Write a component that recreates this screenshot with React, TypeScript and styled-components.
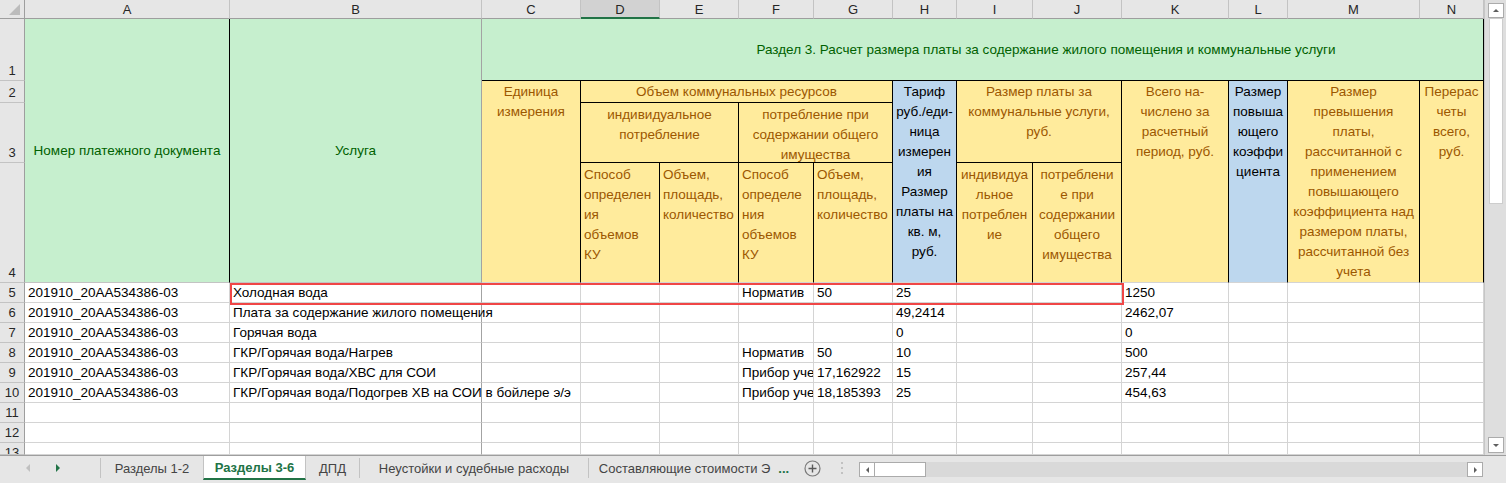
import styled, { createGlobalStyle } from "styled-components";

const GlobalStyle = createGlobalStyle`
    html, body {
        margin: 0;
        padding: 0;
        background: #fff;
    }
    body {
        font-family: "Liberation Sans", Arial, sans-serif;
        overflow: hidden;
    }
`

const COLS = ["A", "B", "C", "D", "E", "F", "G", "H", "I", "J", "K", "L", "M", "N"];
const WIDTHS = [205, 252, 99, 79, 79, 75, 79, 64, 76, 89, 107, 59, 132, 64];
const ROW_HEIGHTS = [62, 22, 60, 120, 20, 20, 20, 20, 20, 20, 20, 20, 12];

const FILL = { green: "#c6efce", yellow: "#ffeb9c", blue: "#bdd7ee" };
const INK = { green: "#006100", yellow: "#9c5700", blue: "#000" };
const GRID = "#d4d4d4";
const FREEZE = "#a3a3a3";
const EXCEL_GREEN = "#217346";

type Fill = keyof typeof FILL;

const Page = styled.div`
    width: 1506px;
    height: 483px;
    display: flex;
    flex-direction: column;
    background: #fff;
`

const Top = styled.div`
    display: flex;
    height: 455px;
`

const Sheet = styled.div`
    width: 1484px;
    height: 455px;
    display: grid;
    grid-template-columns: 25px ${WIDTHS.map((w) => w + "px").join(" ")};
    grid-template-rows: 19px ${ROW_HEIGHTS.map((h) => h + "px").join(" ")};
    overflow: hidden;
    font-size: 13.5px;
`

const Corner = styled.div`
    grid-column: 1;
    grid-row: 1;
    background: #e6e6e6;
    border-right: 1px solid #9e9e9e;
    border-bottom: 1px solid #9e9e9e;
    position: relative;
    &::after {
        content: "";
        position: absolute;
        right: 4px;
        bottom: 3px;
        border-style: solid;
        border-width: 0 0 11px 11px;
        border-color: transparent transparent #bcbcbc transparent;
    }
`

const ColHead = styled.div<{ $col: number; $active?: boolean }>`
    grid-column: ${(p) => p.$col};
    grid-row: 1;
    background: ${(p) => (p.$active ? "#d2d2d2" : "#e6e6e6")};
    border-right: 1px solid #c3c3c3;
    border-bottom: ${(p) => (p.$active ? `2px solid ${EXCEL_GREEN}` : "1px solid #9e9e9e")};
    color: #262626;
    font-size: 13px;
    text-align: center;
    line-height: 19px;
`

const RowHead = styled.div<{ $row: number; $tall?: boolean }>`
    grid-column: 1;
    grid-row: ${(p) => p.$row};
    background: #e6e6e6;
    border-right: 1px solid #9e9e9e;
    border-bottom: 1px solid #c3c3c3;
    color: #262626;
    font-size: 13px;
    display: flex;
    flex-direction: column;
    justify-content: ${(p) => (p.$tall ? "flex-end" : "flex-start")};
    align-items: center;
    line-height: 19px;
    overflow: hidden;
`

const HeadCell = styled.div<{
    $fill: Fill;
    $col: string;
    $row: string;
    $align?: "left" | "center";
    $middle?: boolean;
    $pt?: number;
    $pl?: number;
    $r?: string;
    $b?: string;
}>`
    grid-column: ${(p) => p.$col};
    grid-row: ${(p) => p.$row};
    background: ${(p) => FILL[p.$fill]};
    color: ${(p) => INK[p.$fill]};
    border-right: 1px solid ${(p) => p.$r ?? "#000"};
    border-bottom: 1px solid ${(p) => p.$b ?? "#000"};
    display: flex;
    flex-direction: column;
    justify-content: ${(p) => (p.$middle ? "center" : "flex-start")};
    align-items: ${(p) => (p.$align === "left" ? "flex-start" : "center")};
    padding: ${(p) => p.$pt ?? 1}px 1px 0 ${(p) => p.$pl ?? 1}px;
    line-height: 20px;
    white-space: nowrap;
    overflow: hidden;
    min-width: 0;
`

const TextLine = styled.span`
    display: block;
`

const DataCell = styled.div<{ $col: number; $row: number; $freeze?: boolean; $spill?: boolean }>`
    grid-column: ${(p) => p.$col};
    grid-row: ${(p) => p.$row};
    border-right: 1px solid ${(p) => (p.$freeze ? FREEZE : GRID)};
    border-bottom: 1px solid ${GRID};
    padding: 0 3px;
    line-height: 20px;
    color: #000;
    white-space: nowrap;
    overflow: ${(p) => (p.$spill ? "visible" : "hidden")};
    min-width: 0;
`

const Selection = styled.div`
    grid-column: 3 / 12;
    grid-row: 6;
    border: 2px solid #f04646;
    margin: 0 -2px -2px 0;
    pointer-events: none;
`

const VScroll = styled.div`
    width: 22px;
    background: #dedede;
    border-left: 1px solid #c6c6c6;
    box-sizing: border-box;
    display: flex;
    flex-direction: column;
    align-items: center;
    padding: 3px 0 2px;
`

const ScrollBtn = styled.div<{ $h?: number }>`
    width: 16px;
    height: ${(p) => p.$h ?? 15}px;
    box-sizing: border-box;
    background: #fff;
    border: 1px solid #ababab;
    display: flex;
    align-items: center;
    justify-content: center;
    flex: none;
`

const VThumb = styled.div`
    width: 14px;
    height: 186px;
    background: #fff;
    border: 1px solid #cdcdcd;
    box-sizing: border-box;
    flex: none;
`

const Spacer = styled.div`
    flex: 1;
`

const Arrow = styled.span<{ $dir: "up" | "down" | "left" | "right"; $color?: string; $size?: number }>`
    width: 0;
    height: 0;
    border-style: solid;
    ${(p) => {
        const s = p.$size ?? 3;
        const c = p.$color ?? "#5f5f5f";
        if (p.$dir === "up") return `border-width: 0 ${s}px ${s}px ${s}px; border-color: transparent transparent ${c} transparent;`;
        if (p.$dir === "down") return `border-width: ${s}px ${s}px 0 ${s}px; border-color: ${c} transparent transparent transparent;`;
        if (p.$dir === "left") return `border-width: ${s}px ${s}px ${s}px 0; border-color: transparent ${c} transparent transparent;`;
        return `border-width: ${s}px 0 ${s}px ${s}px; border-color: transparent transparent transparent ${c};`;
    }}
`

const TabBar = styled.div`
    height: 28px;
    box-sizing: border-box;
    border-top: 1px solid #9e9e9e;
    background: #e6e6e6;
    display: flex;
    align-items: flex-start;
    font-family: "Liberation Sans", Arial, sans-serif;
    font-size: 13px;
`

const SheetNav = styled.div`
    width: 100px;
    height: 24px;
    display: flex;
    align-items: center;
    gap: 26px;
    padding-left: 26px;
    box-sizing: border-box;
    flex: none;
`

const Sep = styled.div`
    width: 1px;
    height: 20px;
    margin-top: 2px;
    background: #c3c3c3;
    flex: none;
`

const Tab = styled.div<{ $w: number; $active?: boolean }>`
    width: ${(p) => p.$w}px;
    height: 24px;
    box-sizing: border-box;
    display: flex;
    align-items: center;
    justify-content: center;
    white-space: nowrap;
    flex: none;
    color: ${(p) => (p.$active ? EXCEL_GREEN : "#444")};
    font-weight: ${(p) => (p.$active ? 700 : 400)};
    background: ${(p) => (p.$active ? "#fff" : "transparent")};
    border-bottom: ${(p) => (p.$active ? `2px solid ${EXCEL_GREEN}` : "none")};
    border-left: ${(p) => (p.$active ? "1px solid #c3c3c3" : "none")};
    border-right: ${(p) => (p.$active ? "1px solid #c3c3c3" : "none")};
`

const More = styled.span`
    color: ${EXCEL_GREEN};
    font-weight: 700;
    margin-left: 8px;
`

const IconSlot = styled.div<{ $w: number }>`
    width: ${(p) => p.$w}px;
    height: 24px;
    display: flex;
    align-items: center;
    justify-content: center;
    flex: none;
`

const HScroll = styled.div`
    flex: 1;
    height: 15px;
    margin: 6px 23px 0 0;
    background: #d9d9d9;
    display: flex;
`

const HThumb = styled.div`
    width: 51px;
    height: 15px;
    background: #fff;
    border: 1px solid #ababab;
    border-left: none;
    box-sizing: border-box;
`

type Row = { n: number; cells: Partial<Record<string, string>> };

const ROWS: Row[] = [
    { n: 5, cells: { A: "201910_20AA534386-03", B: "Холодная вода", F: "Норматив", G: "50", H: "25", K: "1250" } },
    { n: 6, cells: { A: "201910_20AA534386-03", B: "Плата за содержание жилого помещения", H: "49,2414", K: "2462,07" } },
    { n: 7, cells: { A: "201910_20AA534386-03", B: "Горячая вода", H: "0", K: "0" } },
    { n: 8, cells: { A: "201910_20AA534386-03", B: "ГКР/Горячая вода/Нагрев", F: "Норматив", G: "50", H: "10", K: "500" } },
    { n: 9, cells: { A: "201910_20AA534386-03", B: "ГКР/Горячая вода/ХВС для СОИ", F: "Прибор учета", G: "17,162922", H: "15", K: "257,44" } },
    { n: 10, cells: { A: "201910_20AA534386-03", B: "ГКР/Горячая вода/Подогрев ХВ на СОИ в бойлере э/э", F: "Прибор учета", G: "18,185393", H: "25", K: "454,63" } },
    { n: 11, cells: {} },
    { n: 12, cells: {} },
    { n: 13, cells: {} },
];

function Lines({ items }: { items: string[] }) {
    return (
        <>
            {items.map((t, i) => (
                <TextLine key={i}>{t}</TextLine>
            ))}
        </>
    );
}

function App() {
    return (
        <Page>
            <GlobalStyle />
            <Top>
                <Sheet>
                    <Corner />
                    {COLS.map((c, i) => (
                        <ColHead key={c} $col={i + 2} $active={c === "D"}>{c}</ColHead>
                    ))}
                    {[1, 2, 3, 4].map((n) => (
                        <RowHead key={n} $row={n + 1} $tall>{n}</RowHead>
                    ))}

                    {/* шапка раздела 3 */}
                    <HeadCell $fill="green" $col="2" $row="2 / 6" $middle $b="#c3c3c3">
                        Номер платежного документа
                    </HeadCell>
                    <HeadCell $fill="green" $col="3" $row="2 / 6" $middle $r={FREEZE} $b="#c3c3c3">
                        Услуга
                    </HeadCell>
                    <HeadCell $fill="green" $col="4 / 16" $row="2" $middle $pl={128}>
                        Раздел 3. Расчет размера платы за содержание жилого помещения и коммунальные услуги
                    </HeadCell>

                    <HeadCell $fill="yellow" $col="4" $row="3 / 6" $b={GRID}>
                        <Lines items={["Единица", "измерения"]} />
                    </HeadCell>
                    <HeadCell $fill="yellow" $col="5 / 9" $row="3">
                        Объем коммунальных ресурсов
                    </HeadCell>
                    <HeadCell $fill="yellow" $col="5 / 7" $row="4" $pt={2}>
                        <Lines items={["индивидуальное", "потребление"]} />
                    </HeadCell>
                    <HeadCell $fill="yellow" $col="7 / 9" $row="4" $pt={2}>
                        <Lines items={["потребление при", "содержании общего", "имущества"]} />
                    </HeadCell>
                    <HeadCell $fill="yellow" $col="5" $row="5" $align="left" $pt={2} $pl={3} $b={GRID}>
                        <Lines items={["Способ", "определен", "ия", "объемов", "КУ"]} />
                    </HeadCell>
                    <HeadCell $fill="yellow" $col="6" $row="5" $align="left" $pt={2} $pl={3} $b={GRID}>
                        <Lines items={["Объем,", "площадь,", "количество"]} />
                    </HeadCell>
                    <HeadCell $fill="yellow" $col="7" $row="5" $align="left" $pt={2} $pl={3} $b={GRID}>
                        <Lines items={["Способ", "определе", "ния", "объемов", "КУ"]} />
                    </HeadCell>
                    <HeadCell $fill="yellow" $col="8" $row="5" $align="left" $pt={2} $pl={3} $b={GRID}>
                        <Lines items={["Объем,", "площадь,", "количество"]} />
                    </HeadCell>
                    <HeadCell $fill="blue" $col="9" $row="3 / 6" $b={GRID}>
                        <Lines items={["Тариф", "руб./еди-", "ница", "измерен", "ия", "Размер", "платы на", "кв. м,", "руб."]} />
                    </HeadCell>
                    <HeadCell $fill="yellow" $col="10 / 12" $row="3 / 5">
                        <Lines items={["Размер платы за", "коммунальные услуги,", "руб."]} />
                    </HeadCell>
                    <HeadCell $fill="yellow" $col="10" $row="5" $pt={2} $b={GRID}>
                        <Lines items={["индивидуа", "льное", "потреблен", "ие"]} />
                    </HeadCell>
                    <HeadCell $fill="yellow" $col="11" $row="5" $pt={2} $b={GRID}>
                        <Lines items={["потреблени", "е при", "содержании", "общего", "имущества"]} />
                    </HeadCell>
                    <HeadCell $fill="yellow" $col="12" $row="3 / 6" $b={GRID}>
                        <Lines items={["Всего на-", "числено за", "расчетный", "период, руб."]} />
                    </HeadCell>
                    <HeadCell $fill="blue" $col="13" $row="3 / 6" $b={GRID}>
                        <Lines items={["Размер", "повыша", "ющего", "коэффи", "циента"]} />
                    </HeadCell>
                    <HeadCell $fill="yellow" $col="14" $row="3 / 6" $b={GRID}>
                        <Lines
                            items={[
                                "Размер",
                                "превышения",
                                "платы,",
                                "рассчитанной с",
                                "применением",
                                "повышающего",
                                "коэффициента над",
                                "размером платы,",
                                "рассчитанной без",
                                "учета",
                            ]}
                        />
                    </HeadCell>
                    <HeadCell $fill="yellow" $col="15" $row="3 / 6" $b={GRID}>
                        <Lines items={["Перерас", "четы", "всего,", "руб."]} />
                    </HeadCell>

                    {/* строки с данными */}
                    {ROWS.map((r) => [
                        <RowHead key={"h" + r.n} $row={r.n + 1}>{r.n}</RowHead>,
                        ...COLS.map((c, i) => (
                            <DataCell key={r.n + c} $col={i + 2} $row={r.n + 1} $freeze={c === "B"} $spill={c === "B"}>
                                {r.cells[c] ?? ""}
                            </DataCell>
                        )),
                    ])}
                    <Selection />
                </Sheet>
                <VScroll>
                    <ScrollBtn>
                        <Arrow $dir="up" />
                    </ScrollBtn>
                    <VThumb />
                    <Spacer />
                    <ScrollBtn $h={16}>
                        <Arrow $dir="down" />
                    </ScrollBtn>
                </VScroll>
            </Top>
            <TabBar>
                <SheetNav>
                    <Arrow $dir="left" $color="#c0c0c0" $size={4} />
                    <Arrow $dir="right" $color={EXCEL_GREEN} $size={4} />
                </SheetNav>
                <Sep />
                <Tab $w={102}>Разделы 1-2</Tab>
                <Tab $w={103} $active>Разделы 3-6</Tab>
                <Tab $w={53}>ДПД</Tab>
                <Sep />
                <Tab $w={228}>Неустойки и судебные расходы</Tab>
                <Sep />
                <Tab $w={210}>
                    Составляющие стоимости Э<More>...</More>
                </Tab>
                <IconSlot $w={26}>
                    <svg width="17" height="17" viewBox="0 0 17 17">
                        <circle cx="8.5" cy="8.5" r="7.5" fill="none" stroke="#7a7a7a" strokeWidth="1.2" />
                        <path d="M8.5 4.5v8M4.5 8.5h8" stroke="#5a5a5a" strokeWidth="1.4" />
                    </svg>
                </IconSlot>
                <IconSlot $w={34}>
                    <svg width="4" height="14" viewBox="0 0 4 14">
                        <circle cx="2" cy="2" r="1" fill="#b5b5b5" />
                        <circle cx="2" cy="7" r="1" fill="#b5b5b5" />
                        <circle cx="2" cy="12" r="1" fill="#b5b5b5" />
                    </svg>
                </IconSlot>
                <HScroll>
                    <ScrollBtn>
                        <Arrow $dir="left" />
                    </ScrollBtn>
                    <HThumb />
                    <Spacer />
                    <ScrollBtn>
                        <Arrow $dir="right" />
                    </ScrollBtn>
                </HScroll>
            </TabBar>
        </Page>
    );
}

export default App;
